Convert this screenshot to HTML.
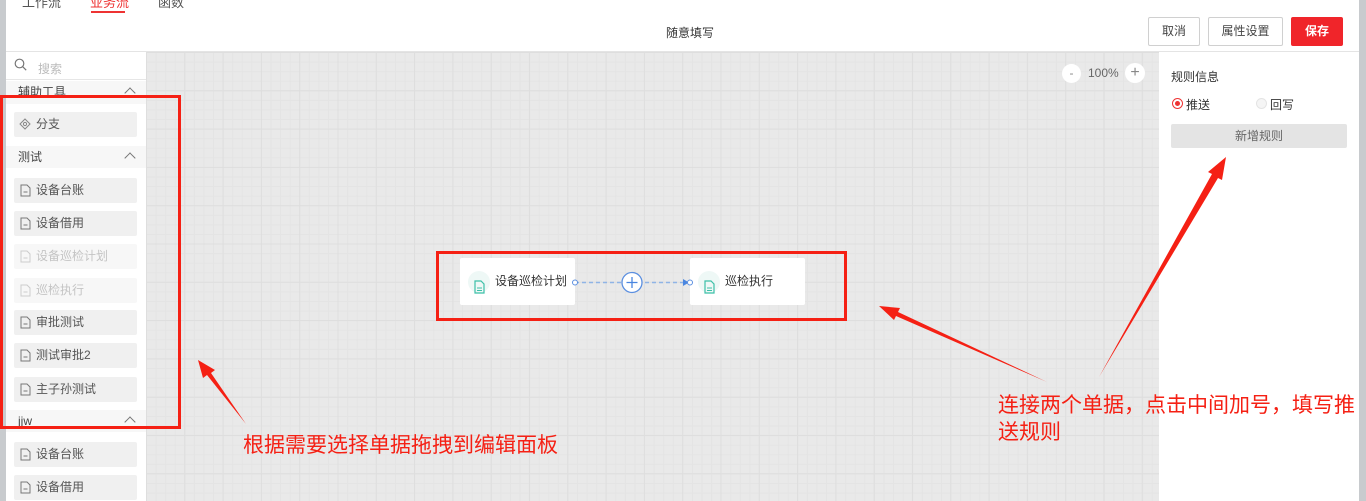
<!DOCTYPE html>
<html><head><meta charset="utf-8"><style>
*{margin:0;padding:0;box-sizing:border-box}
body{width:1366px;height:501px;overflow:hidden;position:relative;background:#fff;font-family:"Liberation Sans","Noto Sans CJK SC",sans-serif;font-size:12px;color:#333}
.abs{position:absolute}
.canvas{left:146px;top:52px;width:1013px;height:449px;background-color:#e9e9e9;
background-image:linear-gradient(#dedede 1px,transparent 1px),linear-gradient(90deg,#dedede 1px,transparent 1px),linear-gradient(#e4e4e4 1px,transparent 1px),linear-gradient(90deg,#e4e4e4 1px,transparent 1px);
background-size:38.3px 38.3px,38.3px 38.3px,9.58px 9.58px,9.58px 9.58px;background-position:0 0,0 0,0 0,0 0}
.side{left:6px;top:52px;width:140px;height:449px;background:#fff}
.item{position:absolute;left:8px;width:123px;height:25px;background:#f0f0f0;border-radius:2px;font-size:12px;color:#555;line-height:25px;padding-left:22px}
.item.dis{background:#f7f7f7;color:#c4c4c4}
.item svg{position:absolute;left:5px;top:6px}
.sec{position:absolute;left:0;width:140px;height:22px;background:#f7f7f7;line-height:22px;padding-left:12px;font-size:12px;color:#444}
.sec i{position:absolute;right:12px;top:8px;width:8px;height:8px;border-left:1px solid #777;border-top:1px solid #777;transform:rotate(45deg)}
.btn{position:absolute;top:17px;height:29px;border:1px solid #d0d0d0;border-radius:2px;line-height:27px;text-align:center;font-size:12px;color:#444;background:#fff}
.node{position:absolute;top:258px;width:115px;height:47px;background:#fff;border-radius:2px;font-size:12px;color:#333;line-height:47px;padding-left:35px}
.node .ic{position:absolute;left:8px;top:13px;width:22px;height:22px;border-radius:50%;background:#eef8f6}
.red{position:absolute;border:3px solid #f52014}
.ann{position:absolute;color:#f52014;font-size:21px;line-height:27px}
</style></head><body>
<div class="abs" style="left:0;top:0;width:6px;height:501px;background:#c8cbce"></div>
<div class="abs" style="left:1359px;top:0;width:7px;height:501px;background:#c8cbce"></div>
<div class="abs" style="left:22px;top:-8px;font-size:13px;color:#555">工作流</div>
<div class="abs" style="left:90px;top:-8px;font-size:13px;color:#e33">业务流</div>
<div class="abs" style="left:91px;top:11px;width:34px;height:2px;background:#e33"></div>
<div class="abs" style="left:158px;top:-8px;font-size:13px;color:#555">函数</div>
<div class="abs" style="left:666px;top:24px;font-size:12px;color:#333">随意填写</div>
<div class="btn" style="left:1148px;width:52px">取消</div>
<div class="btn" style="left:1208px;width:75px">属性设置</div>
<div class="btn" style="left:1291px;width:52px;background:#f0252a;border-color:#f0252a;color:#fff;font-weight:bold">保存</div>
<div class="abs" style="left:6px;top:51px;width:1353px;height:1px;background:#e4e4e4"></div>
<div class="abs canvas"></div>
<div class="abs" style="left:1062px;top:64px;width:19px;height:19px;border-radius:50%;background:#fff;text-align:center;line-height:18px;color:#888">-</div>
<div class="abs" style="left:1088px;top:66px;font-size:12px;color:#666">100%</div>
<div class="abs" style="left:1125px;top:63px;width:20px;height:20px;border-radius:50%;background:#fff;text-align:center;line-height:19px;color:#888;font-size:16px">+</div>
<div class="node" style="left:460px"><div class="ic"><svg width="22" height="22"><path d="M7 5h6l3 3v9H7z" fill="none" stroke="#3cc0a8" stroke-width="1.2"/><path d="M9 12h5M9 14.5h5" stroke="#3cc0a8"/></svg></div>设备巡检计划</div>
<div class="node" style="left:690px"><div class="ic"><svg width="22" height="22"><path d="M7 5h6l3 3v9H7z" fill="none" stroke="#3cc0a8" stroke-width="1.2"/><path d="M9 12h5M9 14.5h5" stroke="#3cc0a8"/></svg></div>巡检执行</div>
<svg class="abs" style="left:570px;top:270px" width="125" height="25">
<line x1="5" y1="12.5" x2="116" y2="12.5" stroke="#8fb4e6" stroke-width="1.5" stroke-dasharray="4 3"/>
<circle cx="5" cy="12.5" r="2.5" fill="#fff" stroke="#5b8fe0"/>
<path d="M113 9l6 3.5-6 3.5z" fill="#4a86e0"/>
<circle cx="120" cy="12.5" r="2.5" fill="#fff" stroke="#5b8fe0"/>
<circle cx="62" cy="12.5" r="10" fill="#fff" stroke="#5b8fe0" stroke-width="1.3"/>
<path d="M56.5 12.5h11M62 7v11" stroke="#4a86e0" stroke-width="1.3"/>
</svg>
<div class="abs side">
<div class="abs" style="left:0;top:0;width:140px;height:28px;border-bottom:1px solid #e6e6e6"></div>
<svg class="abs" style="left:8px;top:6px" width="14" height="14"><circle cx="5.5" cy="5.5" r="4.3" fill="none" stroke="#777" stroke-width="1.2"/><path d="M8.7 8.7l3.5 3.5" stroke="#777" stroke-width="1.2"/></svg>
<div class="abs" style="left:32px;top:8px;color:#bbb;font-size:12px">搜索</div>
<div class="sec" style="top:29px;height:23px;line-height:22px">辅助工具<i></i></div>
<div class="item" style="top:60px;left:8px"><svg width="12" height="12"><path d="M6 1l5 5-5 5-5-5z" fill="none" stroke="#888"/><circle cx="6" cy="6" r="1.6" fill="none" stroke="#888"/></svg>分支</div>
<div class="sec" style="top:94px">测试<i></i></div>
<div class="item" style="top:126px"><svg width="12" height="13"><path d="M2 1h6l3 3v8H2z" fill="none" stroke="#777"/><path d="M4.5 8h4" stroke="#777"/></svg>设备台账</div>
<div class="item" style="top:159px"><svg width="12" height="13"><path d="M2 1h6l3 3v8H2z" fill="none" stroke="#777"/><path d="M4.5 8h4" stroke="#777"/></svg>设备借用</div>
<div class="item dis" style="top:192px"><svg width="12" height="13"><path d="M2 1h6l3 3v8H2z" fill="none" stroke="#ccc"/><path d="M4.5 8h4" stroke="#ccc"/></svg>设备巡检计划</div>
<div class="item dis" style="top:226px"><svg width="12" height="13"><path d="M2 1h6l3 3v8H2z" fill="none" stroke="#ccc"/><path d="M4.5 8h4" stroke="#ccc"/></svg>巡检执行</div>
<div class="item" style="top:258px"><svg width="12" height="13"><path d="M2 1h6l3 3v8H2z" fill="none" stroke="#777"/><path d="M4.5 8h4" stroke="#777"/></svg>审批测试</div>
<div class="item" style="top:291px"><svg width="12" height="13"><path d="M2 1h6l3 3v8H2z" fill="none" stroke="#777"/><path d="M4.5 8h4" stroke="#777"/></svg>测试审批2</div>
<div class="item" style="top:325px"><svg width="12" height="13"><path d="M2 1h6l3 3v8H2z" fill="none" stroke="#777"/><path d="M4.5 8h4" stroke="#777"/></svg>主子孙测试</div>
<div class="sec" style="top:358px">jjw<i></i></div>
<div class="item" style="top:390px"><svg width="12" height="13"><path d="M2 1h6l3 3v8H2z" fill="none" stroke="#777"/><path d="M4.5 8h4" stroke="#777"/></svg>设备台账</div>
<div class="item" style="top:423px"><svg width="12" height="13"><path d="M2 1h6l3 3v8H2z" fill="none" stroke="#777"/><path d="M4.5 8h4" stroke="#777"/></svg>设备借用</div>
</div>
<div class="abs" style="left:1159px;top:52px;width:200px;height:449px;background:#fff"></div>
<div class="abs" style="left:1171px;top:68px;font-size:12px;color:#333">规则信息</div>
<div class="abs" style="left:1172px;top:98px;width:11px;height:11px;border-radius:50%;border:1px solid #e33;background:#fff"><div style="margin:2px;width:5px;height:5px;border-radius:50%;background:#e33"></div></div>
<div class="abs" style="left:1186px;top:96px;font-size:12px;color:#333">推送</div>
<div class="abs" style="left:1256px;top:98px;width:11px;height:11px;border-radius:50%;border:1px solid #e4e4e4;background:#f5f5f5"></div>
<div class="abs" style="left:1270px;top:96px;font-size:12px;color:#333">回写</div>
<div class="abs" style="left:1171px;top:124px;width:176px;height:24px;background:#e4e4e4;border-radius:2px;text-align:center;line-height:24px;color:#666">新增规则</div>
<div class="red" style="left:0;top:95px;width:181px;height:334px"></div>
<div class="red" style="left:436px;top:251px;width:411px;height:70px"></div>
<svg class="abs" style="left:0;top:0" width="1366" height="501">
<polygon points="1099,377 1212,174 1208,172 1226,157 1222,180 1218,178" fill="#f52014"/>
<polygon points="1047,382 898,312 900,308 879,306 894,320 896,316" fill="#f52014"/>
<polygon points="246,424 211,373 215,370 198,360 203,378 207,375" fill="#f52014"/>
</svg>
<div class="ann" style="left:998px;top:392px">连接两个单据，点击中间加号，填写推<br>送规则</div>
<div class="ann" style="left:243px;top:432px">根据需要选择单据拖拽到编辑面板</div>
</body></html>
